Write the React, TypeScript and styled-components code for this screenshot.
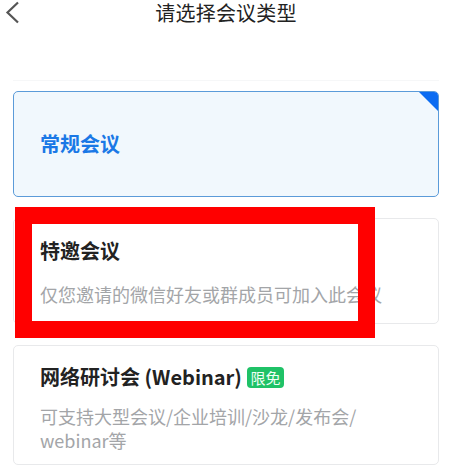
import React from "react";
import styled, { createGlobalStyle } from "styled-components";

const Global = createGlobalStyle`
  html, body { margin: 0; padding: 0; background: #ffffff; }
  body { font-family: "Noto Sans CJK SC", "Noto Sans", sans-serif; }
`;

const Page = styled.div`
  position: relative;
  width: 452px;
  height: 466px;
  overflow: hidden;
  background: #fff;
`;

const Header = styled.div`
  position: relative;
  height: 26px;
  display: flex;
  align-items: center;
  justify-content: center;
`;

const BackButton = styled.div`
  position: absolute;
  left: 5px;
  top: 1px;
  width: 16px;
  height: 23px;
  display: flex;
`;

const Title = styled.div`
  font-size: 20px;
  line-height: 26px;
  color: #222;
  letter-spacing: 0.2px;
`;

const Divider = styled.div`
  margin: 54px 13px 0;
  height: 1px;
  background: #f6f7f8;
`;

const List = styled.div`
  display: flex;
  flex-direction: column;
  gap: 21px;
  padding: 10px 13px 0;
`;

const Card = styled.div<{ $active?: boolean; $h?: number; $pt?: number; $gap?: number }>`
  position: relative;
  box-sizing: border-box;
  height: ${(p) => p.$h ?? 106}px;
  border-radius: 5px;
  border: 1px solid ${(p) => (p.$active ? "#5b9bd9" : "#e8e9eb")};
  background: ${(p) => (p.$active ? "#f1f8fd" : "#fff")};
  padding: ${(p) => (p.$active ? 0 : p.$pt ?? 20)}px 26px 0 26px;
  display: flex;
  flex-direction: column;
  justify-content: ${(p) => (p.$active ? "center" : "flex-start")};
  gap: ${(p) => p.$gap ?? 18}px;
  overflow: hidden;
`;

const Corner = styled.div`
  position: absolute;
  top: 0;
  right: 0;
  width: 0;
  height: 0;
  border-top: 19px solid #0b6cf2;
  border-left: 19px solid transparent;
`;

const CardTitle = styled.div<{ $blue?: boolean }>`
  display: flex;
  align-items: center;
  font-size: 20px;
  line-height: 26px;
  font-weight: 700;
  color: ${(p) => (p.$blue ? "#1a78e6" : "#222")};
`;

const Desc = styled.div`
  font-size: 18px;
  line-height: 24px;
  color: #a3a5a8;
`;

const Badge = styled.span`
  display: inline-flex;
  align-items: center;
  justify-content: center;
  margin-left: 5px;
  width: 37px;
  height: 21px;
  border-radius: 4px;
  background: #1fc267;
  color: #eefff4;
  font-size: 15px;
  font-weight: 400;
  line-height: 21px;
`;

const Annotation = styled.div`
  position: absolute;
  left: 15px;
  top: 207px;
  width: 360px;
  height: 131px;
  box-sizing: border-box;
  border: 17px solid #ff0000;
  pointer-events: none;
`;

export default function App() {
  return (
    <Page>
      <Global />
      <Header>
        <BackButton>
          <svg width="16" height="23" viewBox="0 0 16 23">
            <polyline points="13,1.5 2.5,11.5 13,21.5" fill="none" stroke="#555" strokeWidth="2.2" strokeLinejoin="miter" strokeLinecap="butt" />
          </svg>
        </BackButton>
        <Title>请选择会议类型</Title>
      </Header>
      <Divider />
      <List>
        <Card $active>
          <Corner />
          <CardTitle $blue>常规会议</CardTitle>
        </Card>
        <Card $pt={19} $gap={18}>
          <CardTitle>特邀会议</CardTitle>
          <Desc>仅您邀请的微信好友或群成员可加入此会议</Desc>
        </Card>
        <Card $h={120} $pt={18} $gap={14}>
          <CardTitle>
            网络研讨会 (Webinar)<Badge>限免</Badge>
          </CardTitle>
          <Desc>
            可支持大型会议/企业培训/沙龙/发布会/<wbr />webinar等
          </Desc>
        </Card>
      </List>
      <Annotation />
    </Page>
  );
}
